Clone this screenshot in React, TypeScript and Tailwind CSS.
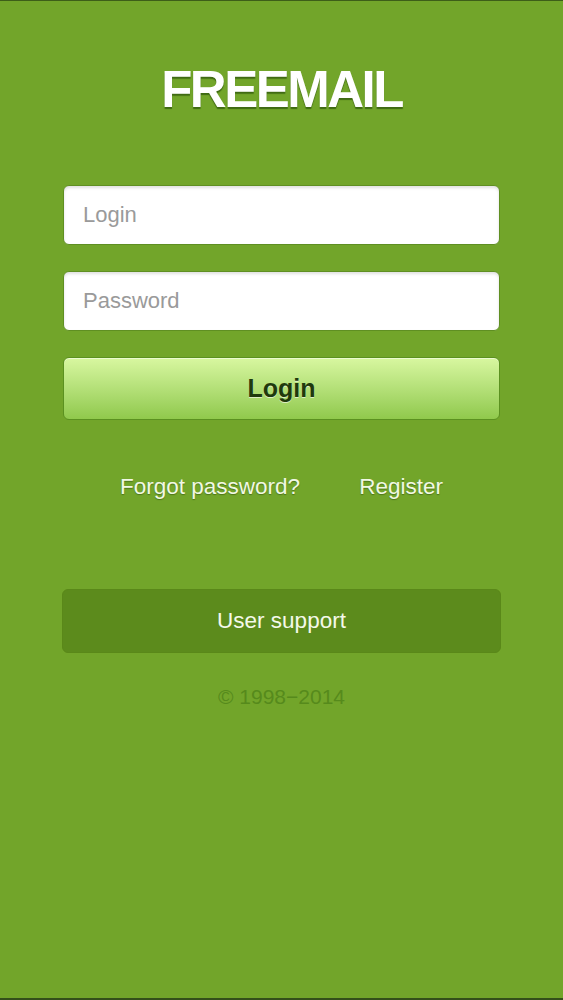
export default function App() {
  return (
    <div
      className="min-h-[1000px] w-full bg-[#72a52a] border-t border-t-[#3d5e18] border-b-2 border-b-[#34501a] flex flex-col items-center px-[63px]"
      style={{ fontFamily: '"Liberation Sans", Arial, sans-serif' }}
    >
      {/* Logo */}
      <h1 className="mt-[63px] text-[51px] leading-none font-bold tracking-[-2.5px] text-white [text-shadow:0_2px_1px_#3f6a13]">
        FREEMAIL
      </h1>

      {/* Form */}
      <form className="mt-[70px] w-full flex flex-col gap-[26px]" onSubmit={(e) => e.preventDefault()}>
        <input
          type="text"
          placeholder="Login"
          className="h-[60px] w-full rounded-[6px] bg-white border border-[#5f8f22] px-[19px] text-[22px] text-[#333] placeholder:text-[#9a9a9a] shadow-[inset_0_2px_3px_rgba(0,0,0,0.12)] outline-none"
        />
        <input
          type="password"
          placeholder="Password"
          className="h-[60px] w-full rounded-[6px] bg-white border border-[#5f8f22] px-[19px] text-[22px] text-[#333] placeholder:text-[#9a9a9a] shadow-[inset_0_2px_3px_rgba(0,0,0,0.12)] outline-none"
        />
        <button
          type="submit"
          className="h-[63px] w-full rounded-[6px] border border-[#5b9120] bg-gradient-to-b from-[#d8f7a0] to-[#90c94c] text-[25px] font-bold text-[#1f3a0c] [text-shadow:0_1px_0_rgba(255,255,255,0.6)] shadow-[inset_0_1px_0_rgba(255,255,255,0.5)]"
        >
          Login
        </button>
      </form>

      {/* Links */}
      <div className="mt-[54px] flex justify-center gap-[59px] text-[22.5px] leading-[26px] text-[#f1f8e4] [text-shadow:0_1px_1px_rgba(40,70,10,0.5)]">
        <a href="#">Forgot password?</a>
        <a href="#">Register</a>
      </div>

      {/* Support */}
      <button className="mt-[89px] h-[64px] w-[calc(100%+2px)] rounded-[6px] bg-[#5c8b1c] border border-[#5a8819] text-[22.5px] text-[#f4f9ea]">
        User support
      </button>

      <p className="mt-[31px] text-[21px] leading-[25px] text-[#568a1c]">© 1998−2014</p>
    </div>
  );
}
